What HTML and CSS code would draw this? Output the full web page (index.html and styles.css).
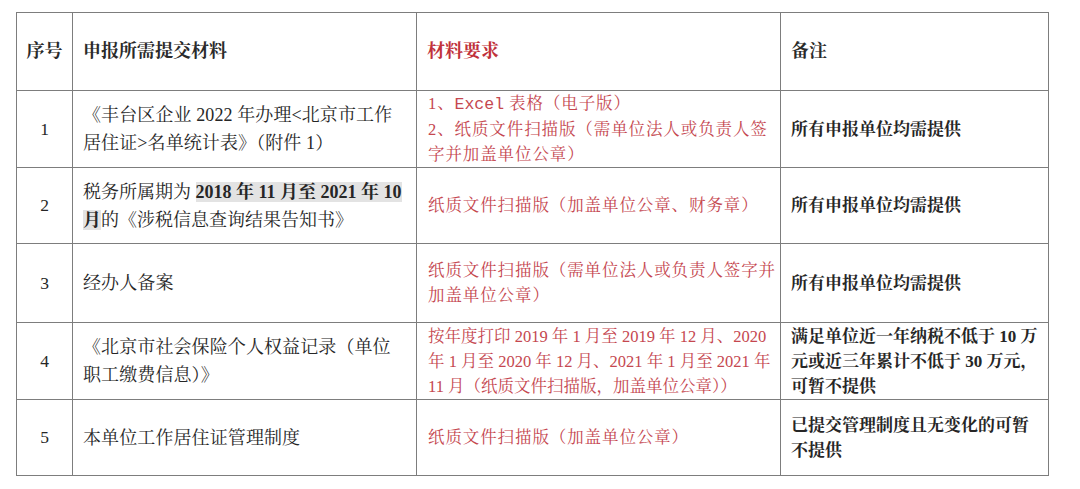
FILE: index.html
```html
<!DOCTYPE html>
<html lang="zh-CN">
<head>
<meta charset="utf-8">
<link rel="stylesheet" href="styles.css">
</head>
<body>
<table class="tbl">
  <colgroup>
    <col class="c1"><col class="c2"><col class="c3"><col class="c4">
  </colgroup>
  <tr class="head">
    <th class="num">序号</th>
    <th>申报所需提交材料</th>
    <th class="red">材料要求</th>
    <th>备注</th>
  </tr>
  <tr class="r77">
    <td class="num">1</td>
    <td class="mat">《丰台区企业 2022 年办理&lt;北京市工作居住证&gt;名单统计表》（附件 1）</td>
    <td class="req">1、<span class="mono">Excel</span> 表格（电子版）<br>2、纸质文件扫描版（需单位法人或负责人签字并加盖单位公章）</td>
    <td class="note">所有申报单位均需提供</td>
  </tr>
  <tr class="r76">
    <td class="num">2</td>
    <td class="mat wide">税务所属期为 <span class="hl">2018 年 11 月至 2021 年 10</span><br><span class="hl">月</span>的《涉税信息查询结果告知书》</td>
    <td class="req">纸质文件扫描版（加盖单位公章、财务章）</td>
    <td class="note">所有申报单位均需提供</td>
  </tr>
  <tr class="r79">
    <td class="num">3</td>
    <td class="mat">经办人备案</td>
    <td class="req">纸质文件扫描版（需单位法人或负责人签字并加盖单位公章）</td>
    <td class="note">所有申报单位均需提供</td>
  </tr>
  <tr class="r77">
    <td class="num">4</td>
    <td class="mat">《北京市社会保险个人权益记录（单位职工缴费信息）》</td>
    <td class="req tight">按年度打印 2019 年 1 月至 2019 年 12 月、2020 年 1 月至 2020 年 12 月、2021 年 1 月至 2021 年 11 月（纸质文件扫描版，加盖单位公章））</td>
    <td class="note">满足单位近一年纳税不低于 10 万元或近三年累计不低于 30 万元，可暂不提供</td>
  </tr>
  <tr class="r76">
    <td class="num">5</td>
    <td class="mat">本单位工作居住证管理制度</td>
    <td class="req">纸质文件扫描版（加盖单位公章）</td>
    <td class="note">已提交管理制度且无变化的可暂不提供</td>
  </tr>
</table>
</body>
</html>
```
FILE: styles.css
```css
html, body {
  margin: 0;
  padding: 0;
  background: #ffffff;
}
body {
  padding: 12px 0 0 16px;
  font-family: "Liberation Serif", "Noto Serif CJK SC", "Noto Sans CJK SC", serif;
  color: #262626;
}
.tbl {
  border-collapse: collapse;
  table-layout: fixed;
  width: 1032px;
}
.c1 { width: 56px; }
.c2 { width: 344px; }
.c3 { width: 364px; }
.c4 { width: 268px; }
.tbl th, .tbl td {
  border: 1.5px solid #7d7d7d;
  padding: 0 8px 0 10px;
  text-align: left;
  vertical-align: middle;
  font-size: 17.5px;
  line-height: 25px;
  font-weight: normal;
}
.tbl tr.head { height: 78px; }
.tbl tr.r76 { height: 76px; }
.tbl tr.r77 { height: 77px; }
.tbl tr.r79 { height: 79px; }
.tbl th {
  font-weight: bold;
  font-size: 18px;
  color: #2a2a2a;
}
.tbl th.red {
  color: #c0313a;
}
.tbl .num {
  text-align: center;
  padding: 0;
}
.tbl td.mat {
  font-size: 18px;
  line-height: 28px;
  letter-spacing: 0.1px;
  padding-right: 14px;
}
.tbl td.mat.wide {
  letter-spacing: 0;
  padding-right: 2px;
}
.tbl td.req {
  color: #c5474f;
  font-size: 16.5px;
  letter-spacing: 0.9px;
  padding-left: 11px;
  padding-right: 4px;
}
.tbl td.req.tight {
  letter-spacing: 0;
  padding-right: 0;
}
.tbl td.note {
  font-weight: bold;
  font-size: 17px;
}
.mono {
  font-family: "Liberation Mono", monospace;
  letter-spacing: 0;
}
.hl {
  background: #e3e3e3;
  font-weight: bold;
}
```
